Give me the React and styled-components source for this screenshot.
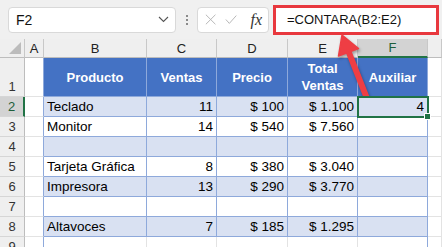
import styled, { createGlobalStyle } from 'styled-components';

const GlobalStyle = createGlobalStyle`
  html, body {
    margin: 0;
    padding: 0;
    background: #fff;
  }
  body {
    font-family: "Liberation Sans", Arial, sans-serif;
    overflow: hidden;
  }
`;

const Sheet = styled.div`
  position: relative;
  width: 442px;
  height: 247px;
  overflow: hidden;
  background: #fff;
`;

const FormulaBar = styled.div`
  display: flex;
  align-items: center;
  height: 39px;
  padding: 0 2px 0 8px;
  box-sizing: border-box;
  background: #f0f0f0;
`;

const NameBox = styled.div`
  display: flex;
  align-items: center;
  justify-content: space-between;
  width: 168px;
  height: 26px;
  padding: 0 6px 0 7px;
  box-sizing: border-box;
  background: #fff;
  border: 1px solid #d9d9d9;
  border-radius: 4px;
  font-size: 14px;
  color: #111;
`;

const Dots = styled.div`
  display: flex;
  flex-direction: column;
  gap: 2px;
  margin: 0 9px 0 10px;
  span {
    width: 2px;
    height: 2px;
    background: #8a8a8a;
  }
`;

const FnBox = styled.div`
  display: flex;
  align-items: center;
  gap: 9px;
  width: 72px;
  height: 26px;
  padding: 0 6px 0 7px;
  box-sizing: border-box;
  background: #fff;
  border: 1px solid #d9d9d9;
  border-radius: 4px;
`;

const Fx = styled.span`
  margin-left: 4px;
  font-family: "Liberation Serif", "Times New Roman", serif;
  font-style: italic;
  font-size: 16px;
  color: #333;
`;

const FormulaInput = styled.div`
  display: flex;
  align-items: center;
  margin-left: 4px;
  width: 166px;
  height: 30px;
  padding-left: 11px;
  box-sizing: border-box;
  background: #fff;
  border: 3px solid #e8383e;
  font-size: 13px;
  color: #111;
`;

const Grid = styled.div`
  display: grid;
  grid-template-columns: 25px 19px 103px 70px 71px 70px 70px 14px;
  grid-template-rows: 19px 39px repeat(8, 20px);
`;

const ColHead = styled.div`
  display: flex;
  align-items: center;
  justify-content: center;
  box-sizing: border-box;
  background: ${(p) => (p.$active ? '#d3d3d3' : '#efefef')};
  border-right: 1px solid #c8c8c8;
  border-bottom: ${(p) => (p.$active ? '2px solid #217346' : '1px solid #bdbdbd')};
  font-size: 13px;
  color: ${(p) => (p.$active ? '#1e5e3a' : '#222')};
`;

const Corner = styled(ColHead)`
  align-items: flex-end;
  justify-content: flex-end;
  padding: 0 3px 3px 0;
`;

const RowHead = styled.div`
  display: flex;
  align-items: flex-end;
  justify-content: center;
  padding-bottom: 2px;
  box-sizing: border-box;
  background: ${(p) => (p.$active ? '#d3d3d3' : '#efefef')};
  border-right: ${(p) => (p.$active ? '2px solid #217346' : '1px solid #bdbdbd')};
  border-bottom: 1px solid #d6d6d6;
  font-size: 13px;
  color: ${(p) => (p.$active ? '#1e5e3a' : '#333')};
`;

const Cell = styled.div`
  position: relative;
  display: flex;
  align-items: center;
  justify-content: ${(p) => (p.$align === 'right' ? 'flex-end' : p.$align === 'center' ? 'center' : 'flex-start')};
  padding: 0 3px;
  box-sizing: border-box;
  background: ${(p) => p.$bg || '#fff'};
  border-right: 1px solid ${(p) => p.$right || '#e3e3e3'};
  border-bottom: 1px solid ${(p) => p.$bottom || '#e3e3e3'};
  font-size: 13.5px;
  color: #000;
  white-space: nowrap;
  ${(p) =>
    p.$selected &&
    `
    outline: 2px solid #217346;
    outline-offset: -1px;
    z-index: 1;
    &::after {
      content: '';
      position: absolute;
      right: -4px;
      bottom: -4px;
      width: 5px;
      height: 5px;
      background: #217346;
      border: 1px solid #fff;
    }
  `}
`;

const HeadCell = styled(Cell)`
  flex-direction: column;
  justify-content: center;
  align-items: center;
  background: #4472c4;
  border-right-color: #8ea9db;
  border-bottom-color: #8ea9db;
  font-size: 13px;
  font-weight: bold;
  line-height: 17px;
  color: #fff;
  text-align: center;
`;

const ArrowLayer = styled.svg`
  position: absolute;
  left: 0;
  top: 0;
  pointer-events: none;
  filter: drop-shadow(1px 2px 1.5px rgba(0, 0, 0, 0.35));
`;

const BLUE = '#8ea9db';
const BAND = '#d9e1f2';

const rows = [
  ['Teclado', '11', '$ 100', '$ 1.100', '4'],
  ['Monitor', '14', '$ 540', '$ 7.560', ''],
  ['', '', '', '', ''],
  ['Tarjeta Gráfica', '8', '$ 380', '$ 3.040', ''],
  ['Impresora', '13', '$ 290', '$ 3.770', ''],
  ['', '', '', '', ''],
  ['Altavoces', '7', '$ 185', '$ 1.295', ''],
];

const columns = ['A', 'B', 'C', 'D', 'E', 'F'];

export default function App() {
  return (
    <Sheet>
      <GlobalStyle />
      <FormulaBar>
        <NameBox>
          <span>F2</span>
          <svg width="11" height="7" viewBox="0 0 11 7">
            <path d="M1 1l4.5 4.5L10 1" fill="none" stroke="#555" strokeWidth="1.1" />
          </svg>
        </NameBox>
        <Dots>
          <span />
          <span />
          <span />
        </Dots>
        <FnBox>
          <svg width="13" height="13" viewBox="0 0 13 13">
            <path d="M1 1l11 11M12 1L1 12" stroke="#b5b5b5" strokeWidth="1.1" />
          </svg>
          <svg width="14" height="11" viewBox="0 0 14 11">
            <path d="M1 5.5l4 4.5L13 1" fill="none" stroke="#b5b5b5" strokeWidth="1.1" />
          </svg>
          <Fx>fx</Fx>
        </FnBox>
        <FormulaInput>=CONTARA(B2:E2)</FormulaInput>
      </FormulaBar>

      <Grid>
        <Corner>
          <svg width="12" height="12" viewBox="0 0 12 12">
            <path d="M12 0V12H0Z" fill="#bcbcbc" />
          </svg>
        </Corner>
        {columns.map((c) => (
          <ColHead key={c} $active={c === 'F'}>
            {c}
          </ColHead>
        ))}
        <ColHead />

        <RowHead>1</RowHead>
        <Cell $right={BLUE} />
        <HeadCell>Producto</HeadCell>
        <HeadCell>Ventas</HeadCell>
        <HeadCell>Precio</HeadCell>
        <HeadCell>
          <span>Total</span>
          <span>Ventas</span>
        </HeadCell>
        <HeadCell>Auxiliar</HeadCell>
        <Cell />

        {rows.map((r, i) => {
          const bg = i % 2 === 0 ? BAND : '#fff';
          return [
            <RowHead key={`h${i}`} $active={i === 0}>
              {i + 2}
            </RowHead>,
            <Cell key={`a${i}`} $right={BLUE} />,
            ...r.map((v, j) => (
              <Cell
                key={`c${i}-${j}`}
                $bg={bg}
                $right={BLUE}
                $bottom={BLUE}
                $align={j === 0 ? 'left' : 'right'}
                $selected={i === 0 && j === 4}
              >
                {v}
              </Cell>
            )),
            <Cell key={`g${i}`} />,
          ];
        })}

        <RowHead>9</RowHead>
        <Cell $right={BLUE} />
        <Cell />
        <Cell />
        <Cell />
        <Cell />
        <Cell $right={BLUE} />
        <Cell />
      </Grid>

      <ArrowLayer width="442" height="247" viewBox="0 0 442 247">
        <path d="M348.5 51.5L368 101" stroke="#ee3e44" strokeWidth="6" strokeLinecap="round" />
        <path d="M342 35L358.5 48.5L338.5 56Z" fill="#ee3e44" stroke="#ee3e44" strokeWidth="1.5" strokeLinejoin="round" />
      </ArrowLayer>
    </Sheet>
  );
}
